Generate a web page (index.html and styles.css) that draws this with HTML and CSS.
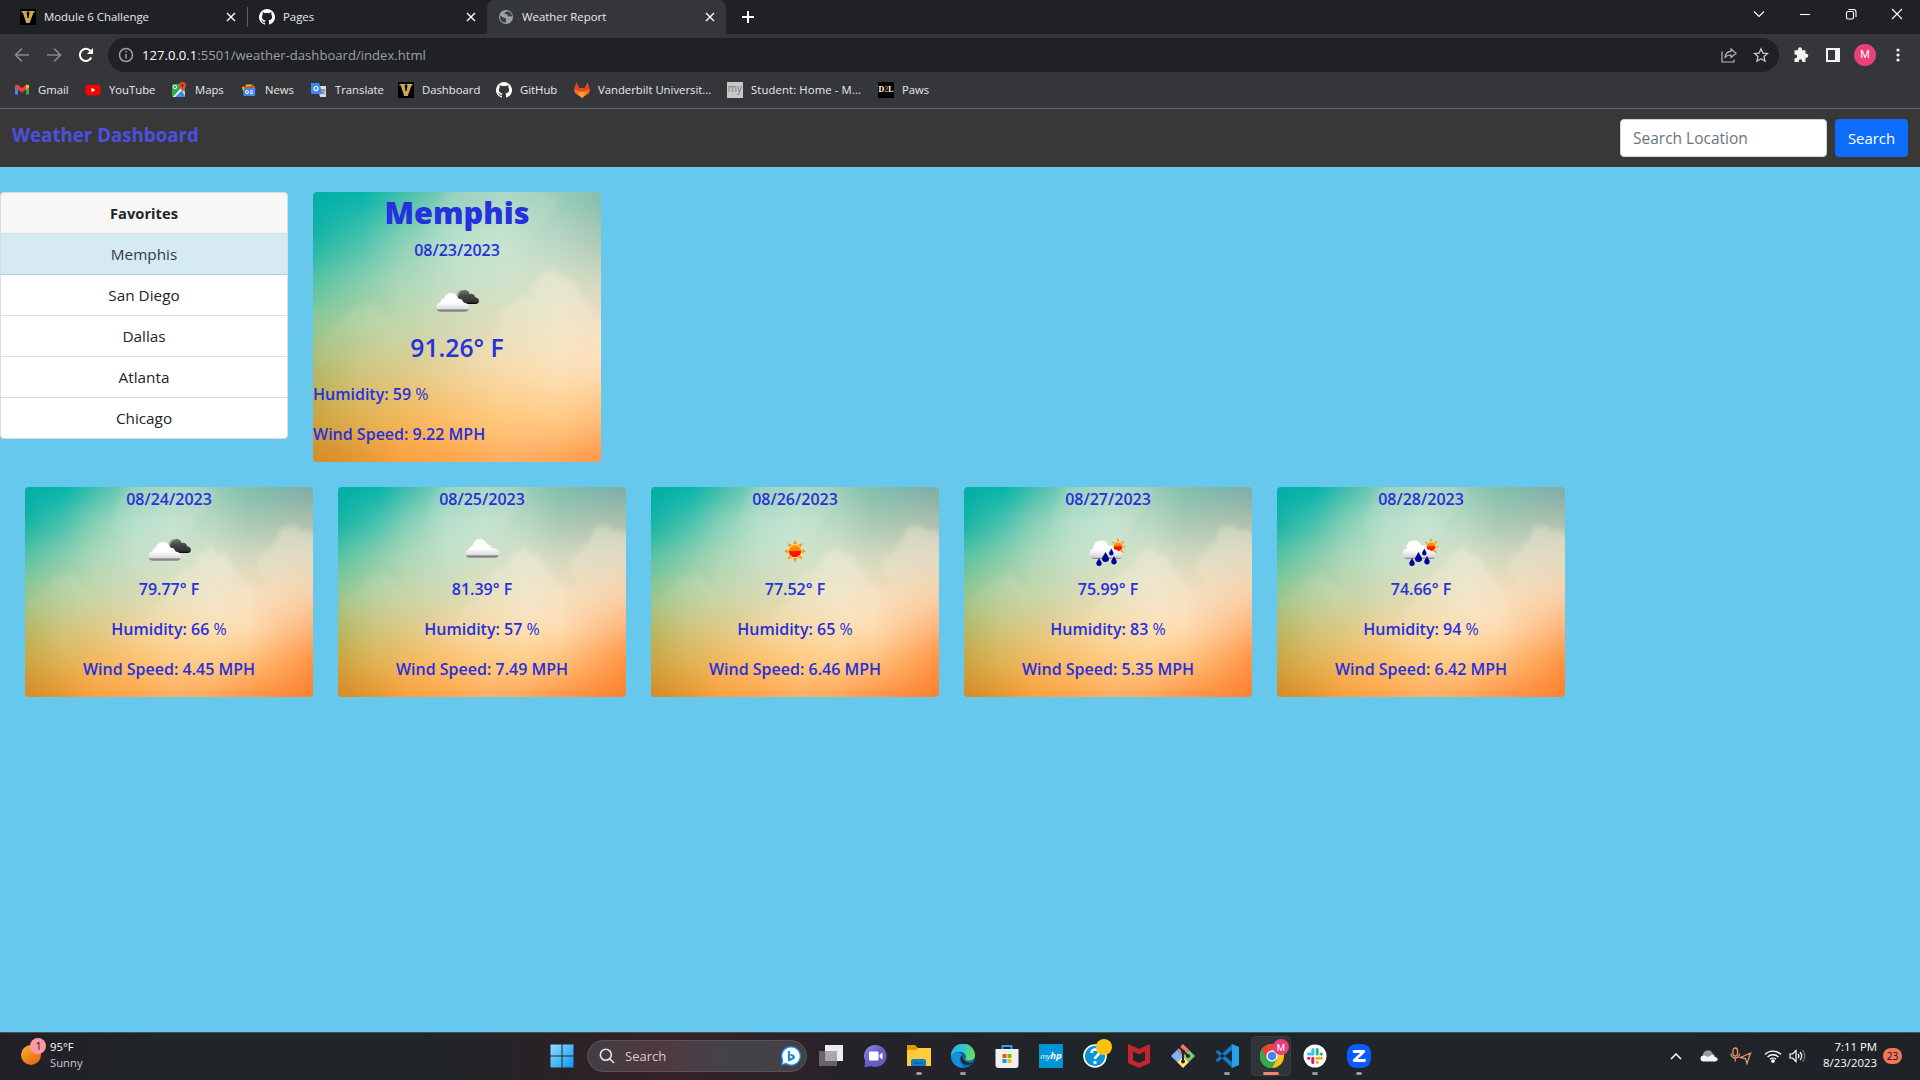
FILE: index.html
```html
<!DOCTYPE html>
<html lang="en">
<head>
<meta charset="utf-8">
<title>Weather Report</title>
<link rel="stylesheet" href="styles.css">
</head>
<body>
<svg class="defs" aria-hidden="true">
  <defs>
    <linearGradient id="cloudFill" x1="0" y1="0" x2="0" y2="1"><stop offset=".5" stop-color="#fff"/><stop offset=".84" stop-color="#dcdcdc"/><stop offset=".89" stop-color="#777"/><stop offset="1" stop-color="#a5a5a5"/></linearGradient>
    <linearGradient id="darkFill" x1="0" y1="0" x2="0" y2="1"><stop offset="0" stop-color="#777"/><stop offset=".4" stop-color="#484848"/><stop offset=".85" stop-color="#333"/><stop offset="1" stop-color="#000"/></linearGradient>
    <linearGradient id="rainFill" x1="0" y1="0" x2="0" y2="1"><stop offset=".5" stop-color="#fff"/><stop offset=".9" stop-color="#d5d5d5"/><stop offset="1" stop-color="#777"/></linearGradient>
    <linearGradient id="sunFill" x1="0" y1="0" x2="0" y2="1"><stop offset="0" stop-color="#ffa000"/><stop offset=".45" stop-color="#ff7a00"/><stop offset=".5" stop-color="#ff1500"/><stop offset="1" stop-color="#f10"/></linearGradient>
    <symbol id="v" viewBox="0 0 16 16"><path d="M0 0h16v16H0z" fill="#000"/><path d="M1.500 2h6v1.500h-1L8 9.500l1.700-6H8.500V2h6v1.500h-1L9.700 14H6.200L2.800 3.500H1.500z" fill="#d0a556"/><path d="M8 3v6" stroke="#000" stroke-width="1"/></symbol>
    <symbol id="github" viewBox="0 0 16 16"><path fill="#fff" d="M8 0a8 8 0 0 0-2.530 15.590c.4.070.55-.17.550-.38v-1.490c-2.230.49-2.700-.95-2.700-.95-.36-.92-.89-1.170-.89-1.170-.73-.5.050-.49.050-.49.810.06 1.230.830 1.230.830.720 1.230 1.880.87 2.340.67.070-.52.280-.88.510-1.080-1.780-.2-3.640-.89-3.640-3.950 0-.87.310-1.590.82-2.150-.08-.2-.36-1.020.080-2.120 0 0 .67-.22 2.200.820a7.700 7.700 0 0 1 4 0c1.530-1.040 2.200-.82 2.200-.82.440 1.100.160 1.920.080 2.120.51.560.82 1.270.82 2.150 0 3.070-1.870 3.750-3.650 3.950.29.250.54.730.54 1.480v2.200c0 .21.150.460.550.380A8 8 0 0 0 8 0z"/></symbol>
    <symbol id="broken" viewBox="0 0 50 50"><path d="M26 20c0-5 2.500-8 6.500-8 3 0 4.500 1.500 5 4 3-.8 5.500.8 5.500 3.200 2.500.3 4 1.800 4 3.800 0 1.800-1.500 3-3.500 3H34z" fill="url(#darkFill)"/><path d="M25 19c0-4 2.500-6.500 5.500-6.500" fill="none" stroke="#9a9a9a" stroke-width="1.200"/><path d="M9.500 34c-3 0-5-2-5-4.800C4.500 26.500 6 25 8.500 24.500c0-2.500 1.500-4 3.500-4 1-3.500 3.500-5.500 7-5.500 3.800 0 6.300 2.500 6.800 6 3-.6 5 1 5.500 3.800 3.700 0 5.700 1.700 5.700 4.400S35 34 32.500 34z" fill="url(#cloudFill)"/></symbol>
    <symbol id="overcast" viewBox="0 0 50 50"><path d="M13 31c-3 0-4.500-1.800-4.500-4.300 0-2.200 1.200-3.700 3.200-4.200.3-2 2-3.300 3.800-3.300.5-4.500 3.500-7.200 7.500-7.200 3.200 0 6 2.200 7 5 2.500.3 4 2 4.300 4 4.700.3 7.700 2.200 7.700 5.400S40 31 37 31z" fill="url(#cloudFill)"/></symbol>
    <symbol id="sun" viewBox="0 0 50 50"><path d="M25 12.500l2.200 5h-4.400zM25 35.800l2.200-5h-4.400zM14 24.200l4.500-2.200v4.400zM36 24.200L31.500 22v4.400zM17.500 16l5 2-3 3zM32.500 16l-5 2 3 3zM17.500 32.500l5-2-3-3zM32.500 32.500l-5-2 3-3z" fill="#f39a12"/><circle cx="25" cy="24.200" r="6.600" fill="url(#sunFill)" stroke="#ffe2a0"/></symbol>
    <symbol id="shower" viewBox="0 0 50 50"><g transform="translate(15 -.8)"><path d="M20 11.500l1.500 4h-3zM28 20.500l-4-1.500v3zM14 15l4 2-2 2zM26.500 14.500l-4.500 2 2 2.500zM26 27l-4-2 2-2z" fill="#f39a12"/><circle cx="20" cy="20.500" r="4.800" fill="url(#sunFill)" stroke="#ffe2a0"/></g><path d="M11.500 32C8.500 32 6.500 29.500 6.500 27c0-2.800 1.700-4.800 4-5.500 0-4.700 3-8 7.500-8 4 0 6.500 2 7.300 5.200 3.500-1 5.700 1 6.200 4.300 1-.5 3-.3 4.200 1.500 2.300-.2 4 1.200 4 3.500 0 2.500-1.700 4-3.700 4z" fill="url(#rainFill)"/><path d="M22.500 25c2 4 3.500 5 3.500 7s-1.500 3-3.500 3-3.500-1-3.500-3 1.500-3 3.500-7zM16 31c1.500 3 2.700 3.800 2.700 5.500S17.500 39 16 39s-2.700-.8-2.700-2.500S14.500 34 16 31zM31 29c1.500 3.300 2.700 4 2.700 5.700s-1.200 2.800-2.700 2.800-2.700-1-2.700-2.800S29.500 32.300 31 29zM28.300 21.500c1 2.500 2.200 3.300 2.200 4.800s-1 2.200-2.200 2.200-2.200-.8-2.200-2.200 1.200-2.300 2.200-4.800z" fill="#00009c"/></symbol>
  </defs>
</svg>

<div class="tabs">
  <div class="tab"><svg width="16" height="16"><use href="#v"/></svg><span>Module 6 Challenge</span><svg class="x" width="10" height="10" viewBox="0 0 10 10"><path d="M1 1l8 8M9 1l-8 8"/></svg></div>
  <div class="tab tab-split"><svg width="16" height="16"><use href="#github"/></svg><span>Pages</span><svg class="x" width="10" height="10" viewBox="0 0 10 10"><path d="M1 1l8 8M9 1l-8 8"/></svg></div>
  <div class="tab tab-active"><svg width="16" height="16" viewBox="0 0 16 16"><circle cx="8" cy="8" r="7" fill="#9aa0a6"/><path d="M2.500 6.500l3 2.200c1 .3 2.500 0 2.500 1.500v3.300c-3 .3-5-1.500-5.800-3.500zM9.500 2.500c-2 .5-3 1-2.800 2.500l2.500.3 1 2.200 3.800-.2c0-2.500-2-4.500-4.500-4.800z" fill="#3b3d41"/></svg><span>Weather Report</span><svg class="x" width="10" height="10" viewBox="0 0 10 10"><path d="M1 1l8 8M9 1l-8 8"/></svg></div>
  <svg class="plus" width="12" height="12" viewBox="0 0 12 12"><path d="M6 0v12M0 6h12" stroke="#fff" stroke-width="2"/></svg>
  <div class="window-controls">
    <svg width="12" height="12" viewBox="0 0 12 12"><path d="M1 3.500l5 5 5-5"/></svg>
    <svg width="12" height="12" viewBox="0 0 12 12"><path d="M1 6.500h10"/></svg>
    <svg width="12" height="12" viewBox="0 0 12 12"><rect x="1.500" y="3.500" width="7" height="7.500" rx="1.500"/><path d="M3.500 1.500h5a2.500 2.500 0 0 1 2.500 2.500v5"/></svg>
    <svg width="12" height="12" viewBox="0 0 12 12"><path d="M1 1l10 10M11 1L1 11"/></svg>
  </div>
</div>

<div class="toolbar">
  <svg width="16" height="16" viewBox="0 0 16 16" class="nav dim"><path d="M15 8H2M8 1.500L1.500 8 8 14.500"/></svg>
  <svg width="16" height="16" viewBox="0 0 16 16" class="nav dim"><path d="M1 8h13M8 1.500L14.500 8 8 14.500"/></svg>
  <svg width="16" height="16" viewBox="0 0 16 16" class="nav"><path d="M13.300 10.500A6 6 0 1 1 12.500 4"/><path d="M15 1v6H9z" fill="#fff" stroke="none"/></svg>
  <div class="omnibox">
    <svg width="16" height="16" viewBox="0 0 16 16" fill="none" stroke="#9aa0a6" stroke-width="1.500"><circle cx="8" cy="8" r="6.500"/><path d="M8 7v4.500M8 4v1.600"/></svg>
    <span class="url"><b>127.0.0.1</b><span>:5501/weather-dashboard/index.html</span></span>
    <svg class="share" width="16" height="16" viewBox="0 0 16 16" fill="none" stroke="#b4b7bb" stroke-width="1.200"><path d="M1 4.500V15h12v-2.500"/><path d="M10 2l5 4.300-5 4.200V8c-3 0-5 1-6 3 .2-4 2.500-6.500 6-6.700z"/></svg>
    <svg width="16" height="16" viewBox="0 0 16 16" fill="none" stroke="#c4c7ca" stroke-width="1.300"><path d="M8 1.800l1.900 4.300 4.600.4-3.500 3.100 1 4.600L8 11.800l-4 2.400 1-4.600L1.500 6.500l4.600-.4z"/></svg>
  </div>
  <svg width="16" height="16" viewBox="0 0 16 16"><path d="M5 2.200a2 2 0 0 1 4 0v1h3.500v3.600h.8a2 2 0 0 1 0 4h-.8V15H9.200v-1a1.700 1.700 0 0 0-3.400 0v1H1.500v-3.800h.8a1.800 1.800 0 0 0 0-3.600h-.8V3.200H5z" fill="#f1f3f4"/></svg>
  <svg class="panel" width="14" height="14" viewBox="0 0 14 14"><path d="M0 0h14v14H0zM2 2v10h7V2z" fill="#f1f3f4" fill-rule="evenodd"/></svg>
  <span class="profile">M</span>
  <svg width="4" height="14" viewBox="0 0 4 14" fill="#f1f3f4"><circle cx="2" cy="2" r="1.600"/><circle cx="2" cy="7" r="1.600"/><circle cx="2" cy="12" r="1.600"/></svg>
</div>

<div class="bookmarks">
  <span><svg width="16" height="16" viewBox="0 0 16 16"><path d="M1 3.500v9h3V6z" fill="#4285f4"/><path d="M15 3.500v9h-3V6z" fill="#34a853"/><path d="M1 3l3-.2L8 6l4-3.200 3 .2v2.500L8 10.500 1 5.500z" fill="#ea4335"/><path d="M12 2.800l3 .2v2.500l-3 2z" fill="#fbbc04"/></svg><i>Gmail</i></span>
  <span><svg width="16" height="16" viewBox="0 0 16 16"><rect x=".5" y="2.800" width="15" height="10.500" rx="2.500" fill="#f00"/><path d="M6.500 5.800v4.500L10.300 8z" fill="#fff"/></svg><i>YouTube</i></span>
  <span><svg width="16" height="16" viewBox="0 0 16 16"><rect x="1" y="2" width="13" height="13" rx="1" fill="#34a853"/><path d="M2 15L9 8l5 6v1z" fill="#4285f4"/><path d="M2 15L13 3l1 2L4 15z" fill="#fff"/><path d="M9 6l5 4v4z" fill="#ddd"/><path d="M11.500 0a3.500 3.500 0 0 1 3.500 3.500C15 6 12 7 11.500 10 11 7 8 6 8 3.500A3.500 3.500 0 0 1 11.500 0z" fill="#ea4335"/><circle cx="11.500" cy="3.500" r="1.200" fill="#8a1d14"/><circle cx="4" cy="5" r="1.700" fill="none" stroke="#fff"/></svg><i>Maps</i></span>
  <span><svg width="16" height="16" viewBox="0 0 16 16"><path d="M3 4l9-2 1 4H3z" fill="#34a853"/><path d="M5 2.500h5V7H5z" fill="#fbbc04"/><path d="M1 4.500l13-.5v4H1z" fill="#ea4335"/><path d="M2 6h12.500L14 14H2.500z" fill="#4285f4"/><path d="M1 5l2 0v5z" fill="#fbbc04"/><circle cx="6" cy="10" r="1.500" fill="none" stroke="#fff"/><path d="M9 8.700h3M9 10.200h3M9 11.700h3" stroke="#fff" stroke-width=".8"/></svg><i>News</i></span>
  <span><svg width="16" height="16" viewBox="0 0 16 16"><path d="M6 4h9v11H9z" fill="#dcdcdc"/><path d="M0 1h8l4 11H1q-1 0-1-1z" fill="#4285f4"/><circle cx="5" cy="6.500" r="2" fill="none" stroke="#fff" stroke-width="1.100"/><path d="M10 8h4M12 7v1M13.500 8c0 2-2 3.500-2.500 4M11.500 9.500l2.500 3" stroke="#777" fill="none"/></svg><i>Translate</i></span>
  <span><svg width="16" height="16"><use href="#v"/></svg><i>Dashboard</i></span>
  <span><svg width="16" height="16"><use href="#github"/></svg><i>GitHub</i></span>
  <span><svg width="16" height="16" viewBox="0 0 16 16"><path d="M2.500.5L5 6h6l2.500-5.500L16 8l-1 3-7 5-7-5-1-3z" fill="#fc6d26"/><path d="M2.500.5L5 6h6l2.500-5.500L16 8l-5 .5L8 13 5 8.500 0 8z" fill="#e24329"/><path d="M4 11.500L8 9l4 2.500L8 16z" fill="#fca326"/></svg><i>Vanderbilt Universit...</i></span>
  <span><em class="my">my</em><i class="student">Student: Home - M...</i></span>
  <span><em class="d2l">D<u>2</u>L</em><i>Paws</i></span>
</div>

<header class="app-header">
  <h1>Weather Dashboard</h1>
  <form class="search"><input type="text" placeholder="Search Location"><button type="button">Search</button></form>
</header>

<main>
  <div class="top-row">
    <ul class="favorites">
      <li class="fav-head">Favorites</li>
      <li class="fav-current">Memphis</li>
      <li>San Diego</li>
      <li>Dallas</li>
      <li>Atlanta</li>
      <li>Chicago</li>
    </ul>
    <section class="card today">
      <h2>Memphis</h2>
      <p>08/23/2023</p>
      <svg class="wx" width="50" height="50"><use href="#broken"/></svg>
      <p class="temp">91.26° F</p>
      <p class="left">Humidity: 59 <small>%</small></p>
      <p class="left">Wind Speed: 9.22 MPH</p>
    </section>
  </div>
  <div class="forecast">
    <section class="card"><p>08/24/2023</p><svg class="wx" width="50" height="50"><use href="#broken"/></svg><p>79.77° F</p><p>Humidity: 66 <small>%</small></p><p>Wind Speed: 4.45 MPH</p></section>
    <section class="card"><p>08/25/2023</p><svg class="wx" width="50" height="50"><use href="#overcast"/></svg><p>81.39° F</p><p>Humidity: 57 <small>%</small></p><p>Wind Speed: 7.49 MPH</p></section>
    <section class="card"><p>08/26/2023</p><svg class="wx" width="50" height="50"><use href="#sun"/></svg><p>77.52° F</p><p>Humidity: 65 <small>%</small></p><p>Wind Speed: 6.46 MPH</p></section>
    <section class="card"><p>08/27/2023</p><svg class="wx" width="50" height="50"><use href="#shower"/></svg><p>75.99° F</p><p>Humidity: 83 <small>%</small></p><p>Wind Speed: 5.35 MPH</p></section>
    <section class="card"><p>08/28/2023</p><svg class="wx" width="50" height="50"><use href="#shower"/></svg><p>74.66° F</p><p>Humidity: 94 <small>%</small></p><p>Wind Speed: 6.42 MPH</p></section>
  </div>
</main>

<footer class="taskbar">
  <div class="widget">
    <svg width="26" height="28" viewBox="0 0 26 28"><defs><linearGradient id="wsun" x1="0" y1="0" x2=".6" y2="1"><stop offset="0" stop-color="#f7b53a"/><stop offset="1" stop-color="#ee6a12"/></linearGradient></defs><circle cx="10" cy="17" r="10" fill="url(#wsun)"/><circle cx="17" cy="8" r="8" fill="#ff97a5"/><text x="17.500" y="12" text-anchor="middle" class="count">1</text></svg>
    <div><div class="deg">95°F</div><div class="cond">Sunny</div></div>
  </div>
  <div class="apps">
    <svg class="start" width="24" height="24" viewBox="0 0 24 24"><defs><linearGradient id="win" x1="0" y1="0" x2="1" y2="1"><stop offset="0" stop-color="#8fe0ff"/><stop offset="1" stop-color="#0a96f5"/></linearGradient></defs><path d="M.5.5h11v11H.5zM12.500.5h11v11h-11zM.5 12.500h11v11H.5zM12.500 12.500h11v11h-11z" fill="url(#win)"/></svg>
    <div class="task-search"><svg width="16" height="16" viewBox="0 0 16 16" fill="none" stroke="#e6e6e6" stroke-width="1.600"><circle cx="6.800" cy="6.800" r="5.500"/><path d="M10.800 10.800L15 15"/></svg><span>Search</span><svg width="20" height="20" viewBox="0 0 20 20"><path d="M10 .8A9.200 9.200 0 1 1 5 17.600l-4.200 1.200.7-5A9.200 9.200 0 0 1 10 .8z" fill="#fff" stroke="#1a86e8" stroke-width="1.400"/><path d="M8 5v9.200l4.500-2.200q1.500-2-3-3.200" fill="none" stroke="#1687e6" stroke-width="2.200" stroke-linejoin="round"/></svg></div>
    <span class="app"><svg width="24" height="24" viewBox="0 0 24 24"><path d="M6 1h18v16H6z" fill="#eee"/><path d="M0 7h18v15H0z" fill="#666"/><path d="M6 7h12v10H6z" fill="#a9a9a9"/></svg></span>
    <span class="app"><svg width="24" height="24" viewBox="0 0 24 24"><defs><linearGradient id="chat" x1="0" y1="0" x2="1" y2="1"><stop offset="0" stop-color="#8b8fe8"/><stop offset=".5" stop-color="#6a5cc8"/><stop offset="1" stop-color="#5560c0"/></linearGradient></defs><path d="M12.500 1A11 11 0 1 1 8 22l-6.500 1.300.6-6.500A11 11 0 0 1 12.500 1z" fill="url(#chat)"/><rect x="6" y="7.500" width="9.500" height="9" rx="1" fill="#fff"/><path d="M16.500 11l3-2.500v7l-3-2.500z" fill="#fff"/></svg></span>
    <span class="app running"><svg width="24" height="24" viewBox="1 0 24 24"><path d="M1 1h8l3 3-1 4H1z" fill="#e09a00"/><path d="M1 6h9l2-2h13v18H1z" fill="#ffcd3c"/><path d="M5 22v-5q0-2 2-2h11q2 0 2 2v5z" fill="#0f7fc8"/><path d="M8 19h9" stroke="#07599a" stroke-width="1.500"/></svg></span>
    <span class="app running"><svg width="24" height="24" viewBox="0 0 24 24"><defs><linearGradient id="edge" x1="0" y1="0" x2="1" y2=".5"><stop offset="0" stop-color="#25a9e8"/><stop offset=".5" stop-color="#35c2d0"/><stop offset="1" stop-color="#66df5c"/></linearGradient></defs><circle cx="12" cy="12" r="12" fill="#0b67b8"/><path d="M0 12A12 12 0 0 1 24 11c.3 4-3 5.500-6 5.500-4 0-4-1.500-3-3C16 9 9 6 4 9q-3 1.500-4 3z" fill="url(#edge)"/><path d="M11 11c-2 2-2 5 0 7.500 2.500 3 7 3 10.500 1 1-.5 0-1-.5-.8-3 .8-9 .3-10-7.700z" fill="#202427"/><path d="M0 12C2 8 8 7 11 11c-3 2-3 8 2 12.500C6 24 0 19 0 12z" fill="#1290d8"/></svg></span>
    <span class="app"><svg width="24" height="24" viewBox="0 0 24 24"><path d="M7.500 6V2h9v4" fill="none" stroke="#2aa7ea" stroke-width="1.800"/><path d="M.5 5h23v16q0 3-3 3h-17q-3 0-3-3z" fill="#f0f0f0"/><path d="M7.500 10h4v4h-4z" fill="#f04e1f"/><path d="M12.500 10h4v4h-4z" fill="#7cba00"/><path d="M7.500 15h4v4h-4z" fill="#00a2ec"/><path d="M12.500 15h4v4h-4z" fill="#fdb900"/></svg></span>
    <span class="app myhp">my<b>hp</b></span>
    <span class="app"><svg class="over" width="30" height="30" viewBox="0 0 30 30"><circle cx="12" cy="18" r="11" fill="#0a96d6" stroke="#fff" stroke-width="1.600"/><path d="M8.500 15c0-5 8-4.500 7.500 0-.3 2.500-4 3-4 6" fill="none" stroke="#fff" stroke-width="2.600"/><circle cx="12" cy="24.500" r="1.700" fill="#fff"/><circle cx="21" cy="9" r="8" fill="#ffc20e"/></svg></span>
    <span class="app"><svg width="24" height="24" viewBox="0 0 24 24"><path d="M1 0l11 5 11-5v19l-11 5-11-5zM6 7.500v8.700l6 2.800 6-2.800V7.500l-6 2.700z" fill="#c1272d" fill-rule="evenodd"/></svg></span>
    <span class="app"><svg width="24" height="24" viewBox="0 0 24 24"><path d="M12 0l6 6-6 6-6-6z" fill="#f07878"/><path d="M6 6l6 6-6 6-6-6z" fill="#80b3ff"/><path d="M18 6l6 6-6 6-6-6z" fill="#80c878"/><path d="M12 12l6 6-6 6-6-6z" fill="#ffe680"/><path d="M8 3l4 4v11M12 7l5 5" stroke="#282828" stroke-width="2" fill="none"/><circle cx="12" cy="7.500" r="2" fill="#282828"/><circle cx="17" cy="12" r="2" fill="#282828"/><circle cx="12" cy="17.500" r="2" fill="#282828"/></svg></span>
    <span class="app running"><svg width="24" height="24" viewBox="0 0 24 24"><path d="M17 6L3 18l-2.500-2L17 .2zM17 18L3 6 .5 8 17 23.800z" fill="#0b7cc8"/><path d="M17 0v24l7-3V3z" fill="#2aa0ec"/></svg></span>
    <span class="app running active"><svg class="over" width="30" height="30" viewBox="0 0 30 30"><circle cx="12" cy="18" r="12" fill="#fbc116"/><path d="M1.600 12A12 12 0 0 0 12 30l5.200-9-5-3z" fill="#34a853"/><path d="M1.600 12A12 12 0 0 1 22.400 12H12l-5 8.500z" fill="#ea4335"/><circle cx="12" cy="18" r="5.600" fill="#fff"/><circle cx="12" cy="18" r="4.300" fill="#4285f4"/><circle cx="21" cy="9" r="8" fill="#ea3e7c"/><text x="21" y="12.500" text-anchor="middle" class="m">M</text></svg></span>
    <span class="app running"><svg width="24" height="24" viewBox="0 0 24 24"><circle cx="12" cy="12" r="11.500" fill="#fff"/><g stroke-width="3" stroke-linecap="round"><path d="M10 5.500V10" stroke="#36c5f0"/><path d="M5.500 10H9" stroke="#36c5f0"/><path d="M14.200 5.500V10M18.500 10H18" stroke="#2eb67d"/><path d="M18.500 14.200H14" stroke="#ecb22e"/><path d="M14.200 18.500V18" stroke="#ecb22e"/><path d="M9.800 18.500V14.200M5.500 14.200H6" stroke="#e01e5a"/></g></svg></span>
    <span class="app running"><svg width="24" height="24" viewBox="0 0 24 24"><rect width="24" height="24" rx="9" fill="#0b5cff"/><path d="M7 7.500h9.800L7.200 16.500h10.300" fill="none" stroke="#fff" stroke-width="2.800" stroke-linejoin="round" stroke-linecap="round"/></svg></span>
  </div>
  <div class="tray">
    <svg width="12" height="8" viewBox="0 0 12 8" fill="none" stroke="#fff" stroke-width="1.500"><path d="M1 7l5-5 5 5"/></svg>
    <svg class="drive" width="18" height="12" viewBox="0 0 18 12"><path d="M3 6a5 5 0 0 1 9-3.500L15 6l-7 2z" fill="#9a9a9a"/><path d="M3.500 11.500a3 3 0 0 1 0-6c1.500 0 2.500.5 4 1.500l4-2c3 0 3 1.500 3.500 2 4 .5 3 4.500 0 4.500z" fill="#f4f4f4"/></svg>
    <svg width="22" height="18" viewBox="0 0 22 18" fill="none" stroke="#e8906f" stroke-width="1.300"><rect x="3" y="1" width="4.500" height="8" rx="2.200"/><path d="M1 6.500c0 6 8.500 6 8.500 0M5.200 11v3.500M20.500 6l-10 4.500 5 1 1.500 5z"/></svg>
    <svg class="wifi" width="18" height="14" viewBox="0 0 18 14" fill="none" stroke="#fff" stroke-width="1.300"><path d="M1 5.500a11.300 11.300 0 0 1 16 0M3.500 8a7.800 7.800 0 0 1 11 0M6 10.300a4.300 4.300 0 0 1 6 0"/><circle cx="9" cy="12" r="1.200" fill="#fff"/></svg>
    <svg width="18" height="14" viewBox="0 0 18 14" fill="none" stroke="#fff" stroke-width="1.200"><path d="M1 5v4h2.500L7 12.500v-11L3.500 5zM9 4.800q1.800 2.200 0 4.400M11 3q3.400 4 0 8"/><path d="M13.500 1q4.500 6 0 12" stroke="#777"/></svg>
    <div class="clock"><div>7:11 PM</div><div>8/23/2023</div></div>
    <span class="notif">23</span>
  </div>
</footer>
</body>
</html>
```
FILE: styles.css
```css
* { box-sizing: border-box; }
html, body { margin: 0; }
body {
  width: 1920px; height: 1080px; overflow: hidden;
  display: flex; flex-direction: column;
  font-family: "Open Sans", "Noto Sans", sans-serif;
  background: #65c8ec; color: #212529;
}
svg { flex: none; display: block; }
.defs { position: absolute; width: 0; height: 0; }

.tabs { height: 34px; flex: none; background: #202124; display: flex; align-items: center; color: #e8eaed; font-size: 11.400px; padding-left: 6px; }
.tab { width: 241px; height: 34px; display: flex; align-items: center; gap: 8px; padding: 0 11px 0 14px; }
.tab span { padding-bottom: 1px; }
.tab .x { margin-left: auto; fill: none; stroke: #fff; stroke-width: 1.400; }
.tab-split { width: 240px; padding: 0 11px 0 12px; }
.tab-split::before { content: ""; width: 1px; height: 20px; background: #5b5e62; margin: 0 3px 0 -12px; }
.tab-active { width: 239px; background: #35363a; border-radius: 8px 8px 0 0; padding: 0 11px 0 11px; }
.plus { margin-left: 16px; }
.window-controls { margin-left: auto; display: flex; gap: 34px; padding: 0 17px 6px 0; }
.window-controls svg { fill: none; stroke: #fff; stroke-width: 1.100; }

.toolbar { height: 42px; flex: none; background: #35363a; display: flex; align-items: center; padding: 0 20px 0 14px; }
.nav { margin-right: 16px; fill: none; stroke: #fff; stroke-width: 2; }
.nav.dim { stroke: #85878a; stroke-width: 1.700; }
.omnibox { width: 1672px; height: 34px; margin: 0 14px 0 -2px; background: #202124; border-radius: 17px; display: flex; align-items: center; gap: 8px; padding: 0 10px; }
.url { font-size: 13.100px; color: #9aa0a6; flex: 1; }
.url b { font-weight: 400; color: #fff; }
.share { margin-right: 8px; }
.profile { width: 22px; height: 22px; margin: 0 20px 0 14px; border-radius: 50%; background: #ec407a; color: #fff; font: 11px/22px Roboto, sans-serif; text-align: center; }
.panel { margin-left: 17px; }

.bookmarks { height: 33px; flex: none; background: #35363a; border-bottom: 1px solid #5f6368; display: grid; grid-template-columns: 71px 86px 70px 70px 87px 98px 78px 153px 151px 1fr; padding: 0 0 4px 14px; align-items: center; font-size: 11.300px; color: #e8eaed; }
.bookmarks span { display: flex; align-items: center; gap: 8px; white-space: nowrap; }
.bookmarks i, .bookmarks em { font-style: normal; }
.bookmarks i { padding-bottom: 2px; }
.bookmarks .student { letter-spacing: .12px; }
.my, .d2l { width: 16px; height: 16px; background: #c8c8c8; color: #777; font: 10px/13px "Open Sans", sans-serif; text-align: center; }
.d2l { background: #000; color: #fff; font: bold 8px/16px "Liberation Serif", serif; }
.d2l u { color: #e87511; text-decoration: none; }

.app-header { height: 58px; flex: none; background: #3a3836; display: flex; align-items: flex-start; justify-content: space-between; padding: 10px 12px; }
h1 { margin: 0; font-size: 18.700px; line-height: 32px; font-weight: 700; color: #4b50e0; }
.search { display: flex; gap: 8px; }
.search input { width: 207px; height: 38px; border: 1px solid #ced4da; border-radius: 4px; padding: 6px 12px; font: 15.500px "Open Sans", sans-serif; }
.search input::placeholder { color: #6c757d; }
.search button { width: 73px; height: 38px; border: 0; border-radius: 4px; background: #0d6efd; color: #fff; font: 14.900px "Open Sans", sans-serif; padding: 0; }

main { flex: 1; }
.top-row { display: flex; align-items: flex-start; gap: 25px; padding-top: 25px; }
.favorites { list-style: none; margin: 0; padding: 0; width: 288px; border: 1px solid #dcdcdc; border-radius: 4px; background: #fff; overflow: hidden; text-align: center; font-size: 15.300px; line-height: 24px; }
.favorites li { height: 41px; padding: 8px 0; border-bottom: 1px solid #dcdcdc; }
.favorites li:last-child { border: 0; height: 40px; }
.favorites .fav-head { background: #f7f7f7; font-weight: 700; font-size: 14.700px; }
.favorites .fav-current { background: #d5eaf1; border-color: #b5cbd3; color: #343a3e; }

.card {
  width: 288px; border-radius: 4px; text-align: center; color: #2730dd;
  font-size: 16px; line-height: 24px; font-weight: 600;
  background-size: auto 100%; background-position: 0 0; background-repeat: no-repeat;
  background-image: url("data:image/svg+xml,%3Csvg xmlns='http://www.w3.org/2000/svg' width='372' height='270' viewBox='0 0 372 270'%3E%3Cdefs%3E%3Cfilter id='b' filterUnits='userSpaceOnUse' x='0' y='-80' width='372' height='430' color-interpolation-filters='sRGB'%3E%3CfeGaussianBlur stdDeviation='0 17'/%3E%3C/filter%3E%3Cfilter id='c' filterUnits='userSpaceOnUse' x='-40' y='-40' width='460' height='360' color-interpolation-filters='sRGB'%3E%3CfeTurbulence type='fractalNoise' baseFrequency='.045' numOctaves='4' seed='4'/%3E%3CfeDisplacementMap in='SourceGraphic' scale='22' xChannelSelector='R' yChannelSelector='G'/%3E%3CfeGaussianBlur stdDeviation='2.4'/%3E%3C/filter%3E%3ClinearGradient id='f' x1='0' y1='0' x2='0' y2='1'%3E%3Cstop offset='0' stop-color='%23fff3de' stop-opacity='.36'/%3E%3Cstop offset='1' stop-color='%23fff3de' stop-opacity='0'/%3E%3C/linearGradient%3E%3ClinearGradient id='r0'%3E%3Cstop offset='0' stop-color='%2300aea6'/%3E%3Cstop offset='.14' stop-color='%2303b4aa'/%3E%3Cstop offset='.25' stop-color='%2340beac'/%3E%3Cstop offset='.38' stop-color='%2386cdb8'/%3E%3Cstop offset='.51' stop-color='%239cd2c0'/%3E%3Cstop offset='.65' stop-color='%2396cbb8'/%3E%3Cstop offset='.77' stop-color='%2380bfae'/%3E%3Cstop offset='1' stop-color='%237aaca6'/%3E%3C/linearGradient%3E%3ClinearGradient id='r1'%3E%3Cstop offset='0' stop-color='%2312b3a6'/%3E%3Cstop offset='.13' stop-color='%2345c2ad'/%3E%3Cstop offset='.24' stop-color='%2388d0b7'/%3E%3Cstop offset='.38' stop-color='%23b2dfca'/%3E%3Cstop offset='.51' stop-color='%23c3e3d1'/%3E%3Cstop offset='.65' stop-color='%23b8d8c5'/%3E%3Cstop offset='.77' stop-color='%23a8c8b4'/%3E%3Cstop offset='1' stop-color='%23aebfac'/%3E%3C/linearGradient%3E%3ClinearGradient id='r2'%3E%3Cstop offset='0' stop-color='%2358c4a4'/%3E%3Cstop offset='.13' stop-color='%2389cdae'/%3E%3Cstop offset='.24' stop-color='%23add8b8'/%3E%3Cstop offset='.38' stop-color='%23c6e0c8'/%3E%3Cstop offset='.51' stop-color='%23cfe2ca'/%3E%3Cstop offset='.65' stop-color='%23d6e0c6'/%3E%3Cstop offset='.77' stop-color='%23d4d9c0'/%3E%3Cstop offset='1' stop-color='%23dbd3b9'/%3E%3C/linearGradient%3E%3ClinearGradient id='r3'%3E%3Cstop offset='0' stop-color='%2396c792'/%3E%3Cstop offset='.13' stop-color='%23b0cf9c'/%3E%3Cstop offset='.24' stop-color='%23c4d6ac'/%3E%3Cstop offset='.38' stop-color='%23d3dab4'/%3E%3Cstop offset='.51' stop-color='%23e1deba'/%3E%3Cstop offset='.65' stop-color='%23eee3c6'/%3E%3Cstop offset='.77' stop-color='%23f3debc'/%3E%3Cstop offset='1' stop-color='%23f8cda4'/%3E%3C/linearGradient%3E%3ClinearGradient id='r4'%3E%3Cstop offset='0' stop-color='%23b4b865'/%3E%3Cstop offset='.13' stop-color='%23d0c580'/%3E%3Cstop offset='.24' stop-color='%23dcca86'/%3E%3Cstop offset='.38' stop-color='%23eed39c'/%3E%3Cstop offset='.51' stop-color='%23f9daa8'/%3E%3Cstop offset='.65' stop-color='%23fde0b6'/%3E%3Cstop offset='.77' stop-color='%23ffdcb2'/%3E%3Cstop offset='1' stop-color='%23fdb377'/%3E%3C/linearGradient%3E%3ClinearGradient id='r5'%3E%3Cstop offset='0' stop-color='%23cca540'/%3E%3Cstop offset='.13' stop-color='%23e0b354'/%3E%3Cstop offset='.24' stop-color='%23f2b85c'/%3E%3Cstop offset='.38' stop-color='%23fdc06c'/%3E%3Cstop offset='.51' stop-color='%23fecb80'/%3E%3Cstop offset='.65' stop-color='%23ffcd88'/%3E%3Cstop offset='.77' stop-color='%23fec07a'/%3E%3Cstop offset='1' stop-color='%23ff923f'/%3E%3C/linearGradient%3E%3ClinearGradient id='r6'%3E%3Cstop offset='0' stop-color='%23d68826'/%3E%3Cstop offset='.13' stop-color='%23e69430'/%3E%3Cstop offset='.24' stop-color='%23fc9f40'/%3E%3Cstop offset='.38' stop-color='%23ffa44a'/%3E%3Cstop offset='.51' stop-color='%23ffac60'/%3E%3Cstop offset='.65' stop-color='%23ffa456'/%3E%3Cstop offset='.77' stop-color='%23ff9445'/%3E%3Cstop offset='1' stop-color='%23fa8030'/%3E%3C/linearGradient%3E%3C/defs%3E%3Cg filter='url(%23b)'%3E%3Cpath fill='url(%23r0)' d='M0-80h372v103H0z'/%3E%3Cpath fill='url(%23r1)' d='M0 23h372v45H0z'/%3E%3Cpath fill='url(%23r2)' d='M0 68h372v45H0z'/%3E%3Cpath fill='url(%23r3)' d='M0 113h372v45H0z'/%3E%3Cpath fill='url(%23r4)' d='M0 158h372v45H0z'/%3E%3Cpath fill='url(%23r5)' d='M0 203h372v45H0z'/%3E%3Cpath fill='url(%23r6)' d='M0 248h372v110H0z'/%3E%3C/g%3E%3Cg filter='url(%23c)' fill='url(%23f)'%3E%3Cpath d='M155 195C150 160 180 142 192 136 182 120 200 108 215 108 220 90 235 76 250 84 272 92 262 114 285 122 300 135 290 180 280 195z'/%3E%3Cpath d='M270 190C275 150 290 130 305 128 295 90 310 70 325 66 320 45 350 45 356 56L420 66V190z'/%3E%3Cpath opacity='.35' d='M0 180C0 140 20 135 30 132 40 110 65 110 75 128 90 140 85 160 85 180z'/%3E%3Cpath opacity='.4' d='M120 90C110 50 110 10 135 0 160-15 235-10 240 10 235 30 210 50 200 95z'/%3E%3C/g%3E%3C/svg%3E");
}
.card h2 { margin: 0; padding: 1px 0 7px; font-size: 30.600px; line-height: 38px; font-weight: 800; }
.card p { margin: 0 0 16px; }
.card .wx { margin: 0 auto; }
.card small { font-size: inherit; font-weight: 400; }
.card .temp { font-size: 24.700px; line-height: 38px; padding-top: 1px; margin-bottom: 15px; }
.card .left { text-align: left; }
.forecast { display: flex; gap: 25px; padding: 25px 0 0 25px; }

.taskbar { height: 48px; flex: none; display: flex; align-items: center; border-top: 1px solid #4a5258; background: linear-gradient(90deg, #221f27 0, #202529 8%, #202529 22%, #2b2126 30%, #372129 35%, #26222a 44%, #202529 55%, #202529 88%, #1f2226 100%); color: #fff; font-size: 11.300px; padding-bottom: 1px; }
.widget { width: 550px; display: flex; gap: 3px; padding: 0 0 3px 21px; line-height: 16px; }
.widget > div { padding-top: 1px; }
.cond { color: #c8cacc; }
.count { font: 10.500px "Open Sans", sans-serif; fill: #111; }
.apps { display: flex; align-items: center; gap: 20px; width: 1120px; }
.start { margin-right: -7px; }
.task-search { width: 220px; height: 32px; margin-right: -8px; border: 1px solid #5b5257; border-radius: 16px; background: linear-gradient(90deg, #423e44, #4f3840 30%, #46424a 60%, #424043); display: flex; align-items: center; gap: 10px; padding: 0 5px 0 11px; font-size: 13px; color: #d0cdd0; }
.task-search span { flex: 1; }
.app { position: relative; width: 24px; height: 40px; display: flex; align-items: center; justify-content: center; flex: none; }
.running::after { content: ""; position: absolute; left: 9px; bottom: 1px; width: 6px; height: 3px; border-radius: 2px; background: #989a9c; }
.active { width: 40px; margin: 0 -8px; padding-left: 8px; justify-content: flex-start; background: #303337; border: 1px solid #393c40; border-radius: 4px; }
.active::after { left: 11px; bottom: 0; width: 16px; background: #f4846a; }
.app.myhp { height: 24px; background: #0096d6; color: #fff; font: italic 7.500px/24px "Open Sans", sans-serif; }
.myhp b { font-size: 9.500px; }
.over { margin: -6px -6px 0 0; }
.m { font: 9.500px Roboto, sans-serif; fill: #fff; }
.tray { display: flex; align-items: center; flex: 1; }
.tray > svg { margin-right: 12px; }
.tray .drive { margin: 0 12px 0 6px; }
.tray .wifi { margin-right: 7px; }
.clock { margin-left: auto; text-align: right; line-height: 16px; padding-bottom: 2px; font-size: 11.400px; }
.notif { width: 19px; height: 16px; margin: 0 18px 0 6px; border-radius: 8px; background: #f4745c; color: #111; font-size: 10px; line-height: 16px; text-align: center; }
```
